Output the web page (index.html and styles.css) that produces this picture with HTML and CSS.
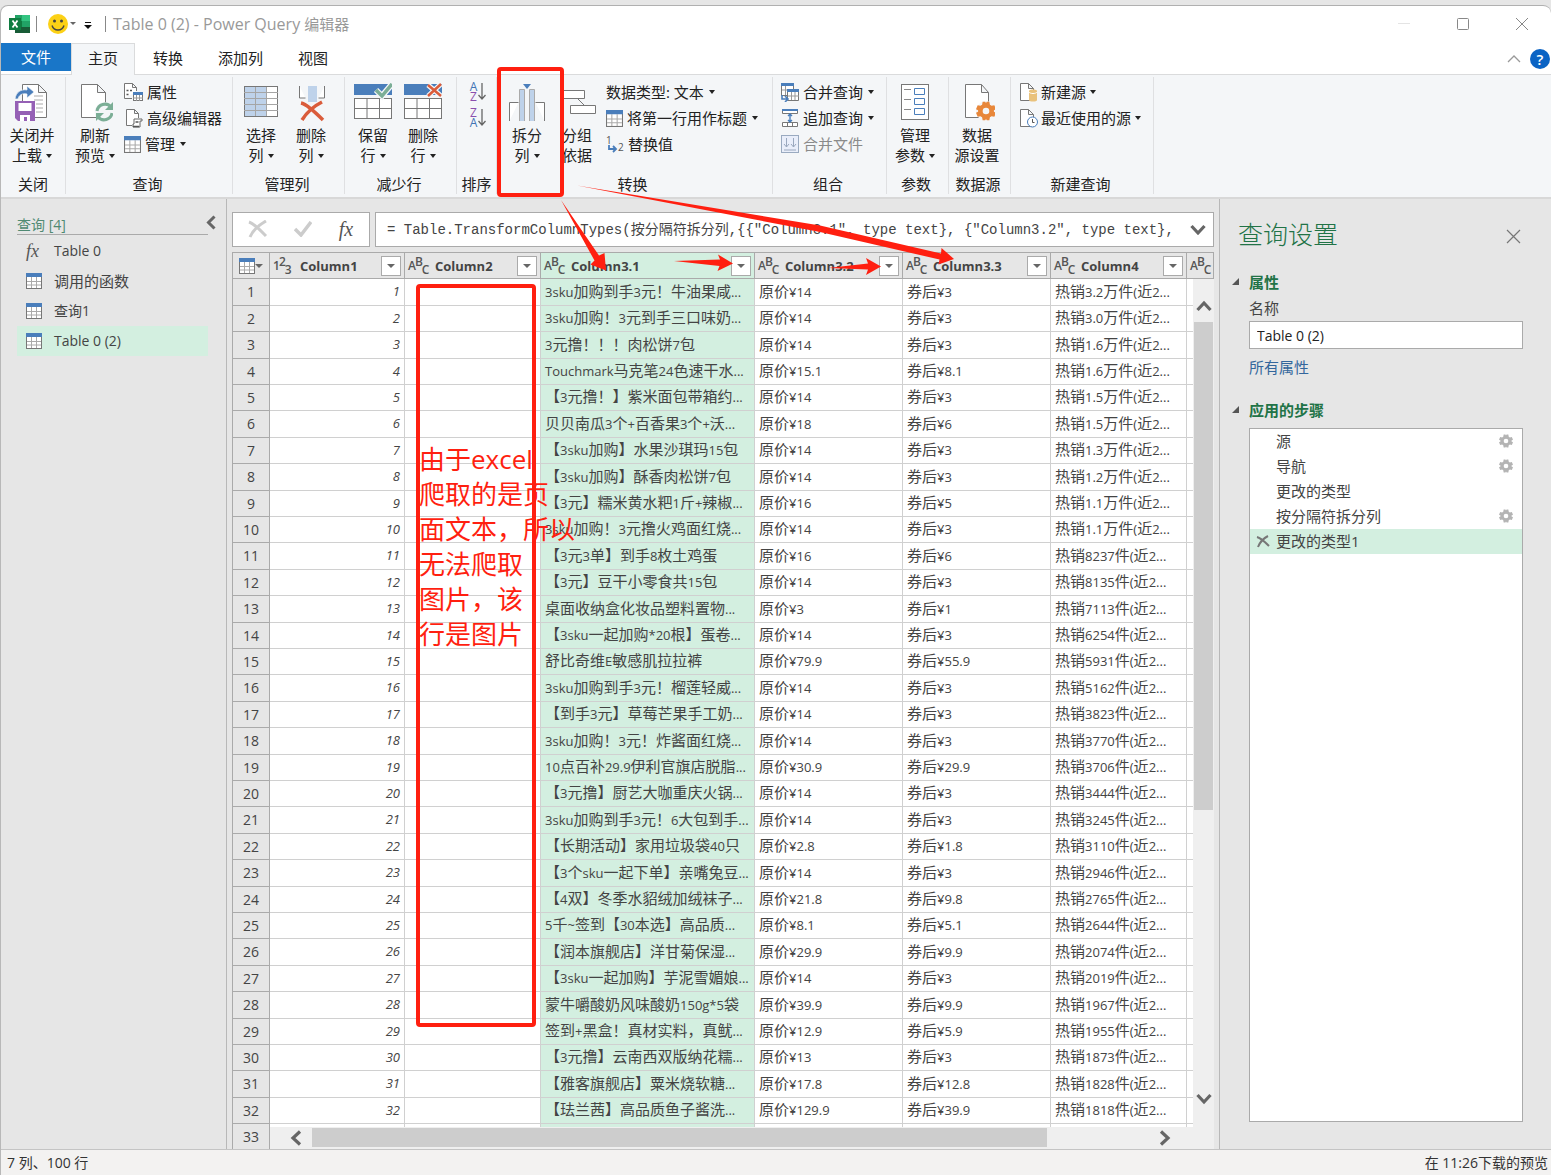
FILE: index.html
```html
<!DOCTYPE html>
<html lang="zh-CN">
<head>
<meta charset="utf-8">
<title>Table 0 (2) - Power Query 编辑器</title>
<link rel="stylesheet" href="styles.css">
</head>
<body>
<svg width="0" height="0" class="defs" aria-hidden="true">
  <symbol id="i-table" viewBox="0 0 16 16">
    <rect x="0.500" y="1.500" width="15" height="14" fill="#fff" stroke="#777"/>
    <path d="M1 8.500h14M1 12h14M5.500 4v11M10.500 4v11" stroke="#aaa" fill="none"/>
    <rect width="16" height="4" y="0" fill="#4a7ebb"/>
  </symbol>
  <symbol id="i-gear" viewBox="0 0 24 24">
    <path fill="currentColor" fill-rule="evenodd" d="M8 1h3l1 1.500L13 1h3l.7 3.600 2 1.200L22 5l2 5-2.500 1v2L24 14l-2 5-3.300-.8-2 1.200L16 23h-3l-1-1.500L11 23H8l-.7-3.600-2-1.200L2 19l-2-5 2.500-1v-2L0 10l2-5 3.300.8 2-1.200zM12 8a4 4 0 1 0 0 8a4 4 0 1 0 0-8z"/>
  </symbol>
  <symbol id="i-grid" viewBox="0 0 38 38">
    <rect x="0.500" y="14.500" width="37" height="20" fill="#fff" stroke="#777"/>
    <path d="M0 24.500h38M13 15v19M25.500 15v19" stroke="#777" fill="none"/>
    <rect width="38" height="11" fill="#4a7ebb"/>
  </symbol>
  <symbol id="i-up" viewBox="0 0 16 12"><path d="M1.500 10L8 3l6.500 7" fill="none" stroke="#666" stroke-width="3.200"/></symbol>
</svg>

<div class="window">
  <header class="titlebar">
    <svg width="21" height="20" viewBox="0 0 21 20"><rect x="6" y="1" width="15" height="18" fill="#21a366"/><path d="M13 1h8v6h-8z" fill="#33c481"/><path d="M6 7h7v6H6z" fill="#107c41"/><path d="M6 13h15v6H6z" fill="#185c37"/><rect x="0" y="4" width="12" height="12" fill="#107c41"/><path d="M3.500 6.500l5 7M8.500 6.500l-5 7" stroke="#fff" stroke-width="1.800"/></svg>
    <i class="vbar"></i>
    <svg class="smile" width="20" height="20" viewBox="0 0 20 20"><circle cx="10" cy="10" r="10" fill="#fcd116"/><circle cx="6.500" cy="7" r="1.500" fill="#444"/><circle cx="13.500" cy="7" r="1.500" fill="#444"/><path d="M4 11.500c2 6 10 6 12 0" fill="none" stroke="#444" stroke-width="1.400"/></svg>
    <i class="caret grey"></i>
    <svg class="more" width="8" height="8" viewBox="0 0 8 8"><path d="M1 0h6v1H1zM0 3h8L4 7z" fill="#111"/></svg>
    <i class="vbar"></i>
    <h1>Table 0 (2) - Power Query <span class="cjk">编辑器</span></h1>
    <div class="winbtns">
      <button type="button" aria-label="最小化"><svg width="14" height="14"><path d="M1 6.500h12" stroke="#e4e4e4"/></svg></button>
      <button type="button" aria-label="最大化"><svg width="14" height="14"><rect x="1.500" y="1.500" width="11" height="11" rx="1" fill="none" stroke="#888"/></svg></button>
      <button type="button" aria-label="关闭"><svg width="14" height="14"><path d="M1 1l12 12M13 1L1 13" stroke="#888"/></svg></button>
    </div>
  </header>

  <nav class="tabs">
    <button type="button" class="tab file">文件</button>
    <button type="button" class="tab active">主页</button>
    <button type="button" class="tab">转换</button>
    <button type="button" class="tab">添加列</button>
    <button type="button" class="tab">视图</button>
    <div class="tabend">
      <button type="button" aria-label="折叠功能区"><svg width="14" height="9"><path d="M1 8l6-6 6 6" fill="none" stroke="#999" stroke-width="1.300"/></svg></button>
      <button type="button" class="help">?</button>
    </div>
  </nav>

  <section class="ribbon">
    <div class="group g-close">
      <div class="tools">
        <button type="button" class="big"><svg width="36" height="40" viewBox="0 0 36 40"><path d="M8.500 18V1.500h16l8 8v25H21M24.500 1.500v8h8" fill="#fff" stroke="#777"/><path d="M20 13h9M20 17h9M22 21h7M22 25h7M22 29h7" stroke="#aaa"/><path d="M1 16c1-7 6-10 12-9V3l7 6-7 6v-4c-5-1-8 1-9 5z" fill="#4a7ebb" stroke="#f4f6f8" stroke-width="0.700"/><path d="M1 18h20v20H4l-3-3z" fill="#9560b5"/><path d="M4.500 20h13v8h-13zM6 32h10v6h-3v-4h-3v4H6z" fill="#fff"/></svg><span>关闭并</span><span>上载<i class="caret"></i></span></button>
      </div>
      <div class="gname">关闭</div>
    </div>
    <div class="group g-query">
      <div class="tools">
        <button type="button" class="big"><svg width="36" height="40" viewBox="0 0 36 40"><path d="M4.500 1.500h16l8 8v25h-24zM20.500 1.500v8h8" fill="#fff" stroke="#777"/><circle cx="27.500" cy="29" r="10" fill="#f4f6f8"/><path d="M20 28a8 8 0 0 1 14-4M35 30a8 8 0 0 1-14 4" fill="none" stroke="#7bae96" stroke-width="3"/><path d="M36 19v8h-8zM19 38v-8h8z" fill="#7bae96"/></svg><span>刷新</span><span>预览<i class="caret"></i></span></button>
        <div class="stack">
          <button type="button"><svg width="19" height="19" viewBox="0 0 19 19"><path d="M.5 15.500V.5h8l4 4V8M8.500.5v4h4M.5 15.500H8" fill="#fff" stroke="#777"/><path d="M2.500 7.500h2M2.500 11.500h2M6 7.500h2" stroke="#555" stroke-width="1.500"/><rect x="9.500" y="9.500" width="9" height="8" fill="#fff" stroke="#777"/><path d="M9 9h10v3H9z" fill="#4a7ebb"/><path d="M9 15h10M12.500 12v6M15.500 12v6" stroke="#999"/></svg>属性</button>
          <button type="button"><svg width="19" height="19" viewBox="0 0 19 19"><path d="M8 16.500H2.500V.5h8l4 4V9M10.500.5v4h4" fill="#fff" stroke="#777"/><path d="M10 10h8v2h-2v6H9v-3h1z" fill="#fff" stroke="#666"/><path d="M11.500 13h3M9 17.500h6" stroke="#555" stroke-width="1.500"/></svg>高级编辑器</button>
          <button type="button"><svg width="17" height="17"><use href="#i-table"/></svg>管理<i class="caret"></i></button>
        </div>
      </div>
      <div class="gname">查询</div>
    </div>
    <div class="group g-cols">
      <div class="tools">
        <button type="button" class="big"><svg width="36" height="40" viewBox="0 0 36 40"><rect x="1.500" y="3.500" width="33" height="30" fill="#fff" stroke="#777"/><path d="M2 4h21v29H2z" fill="#bed2ea"/><path d="M1 9.500h34M1 15.500h34M1 21.500h34M1 27.500h34M12.500 4v29M23.500 4v29" stroke="#a5a5a5"/></svg><span>选择</span><span>列<i class="caret"></i></span></button>
        <button type="button" class="big"><svg width="36" height="40" viewBox="0 0 36 40"><path d="M6.500 3v12h6M31.500 3v12h-6" fill="#fff" stroke="#777"/><path d="M15 3h9v16h-9z" fill="#bed2ea"/><path d="M8 20c5 1 16 11 22 17M29 19c-8 4-15 10-20 18" fill="none" stroke="#da5c3b" stroke-width="3.500"/></svg><span>删除</span><span>列<i class="caret"></i></span></button>
      </div>
      <div class="gname">管理列</div>
    </div>
    <div class="group g-rows">
      <div class="tools">
        <button type="button" class="big"><svg width="38" height="40" viewBox="0 0 38 40"><use href="#i-grid" y="1" width="38" height="38"/><path d="M22 7l6 6L38 1" fill="none" stroke="#f4f6f8" stroke-width="6"/><path d="M22 7l6 6L38 1" fill="none" stroke="#7bae96" stroke-width="3.500"/></svg><span>保留</span><span>行<i class="caret"></i></span></button>
        <button type="button" class="big"><svg width="38" height="40" viewBox="0 0 38 40"><use href="#i-grid" y="1" width="38" height="38"/><path d="M24 2l13 11M37 1L24 13" stroke="#f4f6f8" stroke-width="5"/><path d="M24 2l13 11M37 1L24 13" stroke="#da5c3b" stroke-width="2.500"/></svg><span>删除</span><span>行<i class="caret"></i></span></button>
      </div>
      <div class="gname">减少行</div>
    </div>
    <div class="group g-sort">
      <div class="tools">
        <div class="stack">
          <button type="button" aria-label="升序"><span class="az"><b class="blue">A</b><b class="purple">Z</b></span><svg width="8" height="20" viewBox="0 0 8 20"><path d="M4 1v16M.5 13L4 17l3.500-4" fill="none" stroke="#666" stroke-width="1.300"/></svg></button>
          <button type="button" aria-label="降序"><span class="az"><b class="purple">Z</b><b class="blue">A</b></span><svg width="8" height="20" viewBox="0 0 8 20"><path d="M4 1v16M.5 13L4 17l3.500-4" fill="none" stroke="#666" stroke-width="1.300"/></svg></button>
        </div>
      </div>
      <div class="gname">排序</div>
    </div>
    <div class="group g-trans">
      <div class="tools">
        <button type="button" class="big"><svg width="38" height="40" viewBox="0 0 38 40"><path d="M1.500 38V19.500h9M36.500 38V19.500h-9" fill="#fff" stroke="#777"/><path d="M11.500 38V6.500h5V38M21.500 38V6.500h5V38" fill="#bed2ea" stroke="#aaa"/><path d="M15 1h8l-4 5z" fill="#4a7ebb"/></svg><span>拆分</span><span>列<i class="caret"></i></span></button>
        <button type="button" class="big"><svg width="38" height="40" viewBox="0 0 38 40"><path d="M3.500 7.500h23v8h-23zM12.500 22.500h25v8h-25z" fill="#fff" stroke="#777"/><path d="M20 16l6 6" stroke="#777"/></svg><span>分组</span><span>依据</span></button>
        <div class="stack">
          <button type="button">数据类型: 文本<i class="caret"></i></button>
          <button type="button"><svg width="17" height="17"><use href="#i-table"/></svg>将第一行用作标题<i class="caret"></i></button>
          <button type="button"><svg width="18" height="19" viewBox="0 0 18 19"><text x="0" y="9" class="rep">1</text><text x="12" y="16" class="rep">2</text><path d="M3 10v4h6M7 11l3 3-3 3" fill="none" stroke="#4a7ebb" stroke-width="1.800"/></svg>替换值</button>
        </div>
      </div>
      <div class="gname">转换</div>
    </div>
    <div class="group g-comb">
      <div class="tools">
        <div class="stack">
          <button type="button"><svg width="18" height="19" viewBox="0 0 18 19"><path d="M.5.500h12v12H.5z" fill="#fff" stroke="#777"/><path d="M0 0h13v3H0z" fill="#4a7ebb"/><path d="M4.500 3v9M1 7h5" stroke="#999"/><path d="M6.500 6.500h11v11h-11z" fill="#fff" stroke="#777"/><path d="M6 6h12v3H6z" fill="#4a7ebb"/><path d="M7 13h11M10.500 9v8M14 9v8" stroke="#999"/><path d="M1 12v4h5M4 13l3 3-3 3" fill="none" stroke="#4a7ebb" stroke-width="1.600"/></svg>合并查询<i class="caret"></i></button>
          <button type="button"><svg width="18" height="18" viewBox="0 0 18 18"><path d="M1.500.5h15v4h-15zM1.500 13.500h15v4h-15z" fill="#fff" stroke="#777"/><path d="M1 0h16v2H1z" fill="#4a7ebb"/><path d="M6.500 14v3M11.500 14v3" stroke="#777"/><path d="M9 5v8M7 7l2-2 2 2M7 11l2 2 2-2" fill="none" stroke="#4a7ebb" stroke-width="1.400"/></svg>追加查询<i class="caret"></i></button>
          <button type="button" disabled><svg width="18" height="18" viewBox="0 0 18 18"><rect x="0.500" y="0.500" width="17" height="17" fill="#e9eefa" stroke="#9aaac0"/><path d="M5.500 3v9M3 9l2.500 3L8 9M12.500 3v9M10 9l2.500 3L15 9M3 15h12" fill="none" stroke="#9aa8be"/></svg>合并文件</button>
        </div>
      </div>
      <div class="gname">组合</div>
    </div>
    <div class="group g-param">
      <div class="tools">
        <button type="button" class="big"><svg width="30" height="40" viewBox="0 0 30 40"><rect x="1.500" y="1.500" width="27" height="35" fill="#fff" stroke="#777"/><path d="M4 6.500h7M4 16.500h7M4 26.500h7" stroke="#888"/><path d="M14.500 5.500h10v6h-10zM14.500 15.500h10v6h-10zM14.500 25.500h10v6h-10z" fill="#fff" stroke="#4a7ebb"/></svg><span>管理</span><span>参数<i class="caret"></i></span></button>
      </div>
      <div class="gname">参数</div>
    </div>
    <div class="group g-src">
      <div class="tools">
        <button type="button" class="big"><svg width="36" height="40" viewBox="0 0 36 40"><path d="M6.500 1.500h16l7 8v25h-23zM22.500 1.500v8h7" fill="#fff" stroke="#777"/><circle cx="27" cy="28" r="10" fill="#f4f6f8"/><g color="#e8873a"><use href="#i-gear" x="17" y="18" width="20" height="20"/></g></svg><span>数据</span><span>源设置</span></button>
      </div>
      <div class="gname">数据源</div>
    </div>
    <div class="group g-new">
      <div class="tools">
        <div class="stack">
          <button type="button"><svg width="18" height="19" viewBox="0 0 18 19"><path d="M.5.500h8l5 5v12H.5zM8.500.5v5h5" fill="#fff" stroke="#777"/><path d="M9 8c0-2 8-2 8 0v9c0 2-8 2-8 0z" fill="#e9c27c"/><path d="M9 9c1 2 7 2 8 0" fill="none" stroke="#fff"/></svg>新建源<i class="caret"></i></button>
          <button type="button"><svg width="18" height="19" viewBox="0 0 18 19"><path d="M.5.500h8l5 5v12H.5zM8.500.5v5h5" fill="#fff" stroke="#777"/><circle cx="12.500" cy="13" r="5" fill="#fff" stroke="#4a7ebb"/><path d="M12.500 10v3.500h2" fill="none" stroke="#555"/></svg>最近使用的源<i class="caret"></i></button>
        </div>
      </div>
      <div class="gname">新建查询</div>
    </div>
  </section>

  <main class="main">
    <aside class="queries">
      <div class="qhead"><h2>查询 [4]</h2><button type="button" aria-label="折叠"><svg width="10" height="15"><path d="M8.500 1.500L2.500 7.500l6 6" fill="none" stroke="#666" stroke-width="3"/></svg></button></div>
      <ul>
        <li><span class="fx">fx</span>Table 0</li>
        <li><svg width="16" height="16"><use href="#i-table"/></svg><span class="cjk">调用的函数</span></li>
        <li><svg width="16" height="16"><use href="#i-table"/></svg>查询1</li>
        <li class="sel"><svg width="16" height="16"><use href="#i-table"/></svg>Table 0 (2)</li>
      </ul>
    </aside>

    <section class="center">
      <div class="formula">
        <div class="fbtns">
          <button type="button" aria-label="取消"><svg width="20" height="18"><path d="M1 2c6 2 12 9 17 14M18 1C11 5 5 10 2 17" fill="none" stroke="#ccc" stroke-width="3"/></svg></button>
          <button type="button" aria-label="确认"><svg width="18" height="16"><path d="M1 8l6 6L17 1" fill="none" stroke="#ccc" stroke-width="3.500"/></svg></button>
          <button type="button" class="fx">fx</button>
        </div>
        <div class="fbox">
          <input type="text" aria-label="公式栏" value='= Table.TransformColumnTypes(按分隔符拆分列,{{"Column3.1", type text}, {"Column3.2", type text},'>
          <button type="button" aria-label="展开"><svg width="16" height="12" class="flip"><use href="#i-up"/></svg></button>
        </div>
      </div>
      <div class="gridwrap">
        <table class="grid">
          <colgroup><col class="c-n"><col class="c-1"><col class="c-2"><col class="c-31"><col class="c-32"><col class="c-33"><col class="c-4"><col></colgroup>
          <thead><tr>
            <th class="corner"><svg width="16" height="16"><use href="#i-table"/></svg><i class="caret grey"></i></th>
            <th><div class="th"><span class="type"><b>1</b><b>2</b><b>3</b></span><span class="name">Column1</span><button type="button" aria-label="筛选"><i class="caret grey"></i></button></div></th>
            <th><div class="th"><span class="type"><b>A</b><b>B</b><b>C</b></span><span class="name">Column2</span><button type="button" aria-label="筛选"><i class="caret grey"></i></button></div></th>
            <th class="hot"><div class="th"><span class="type"><b>A</b><b>B</b><b>C</b></span><span class="name">Column3.1</span><button type="button" aria-label="筛选"><i class="caret grey"></i></button></div></th>
            <th><div class="th"><span class="type"><b>A</b><b>B</b><b>C</b></span><span class="name">Column3.2</span><button type="button" aria-label="筛选"><i class="caret grey"></i></button></div></th>
            <th><div class="th"><span class="type"><b>A</b><b>B</b><b>C</b></span><span class="name">Column3.3</span><button type="button" aria-label="筛选"><i class="caret grey"></i></button></div></th>
            <th><div class="th"><span class="type"><b>A</b><b>B</b><b>C</b></span><span class="name">Column4</span><button type="button" aria-label="筛选"><i class="caret grey"></i></button></div></th>
            <th><div class="th"><span class="type"><b>A</b><b>B</b><b>C</b></span></div></th>
          </tr></thead>
          <tbody id="rows"></tbody>
        </table>
        <div class="vscroll"><button type="button" aria-label="向上"><svg width="16" height="12"><use href="#i-up"/></svg></button><div class="thumb"></div><div class="track"></div><button type="button" aria-label="向下"><svg width="16" height="12" class="flip"><use href="#i-up"/></svg></button></div>
        <div class="hscroll"><button type="button" aria-label="向左"><svg width="12" height="16"><path d="M10 1.500L3 8l7 6.500" fill="none" stroke="#666" stroke-width="3.200"/></svg></button><div class="thumb"></div><div class="track"></div><button type="button" aria-label="向右"><svg width="12" height="16"><path d="M2 1.500L9 8l-7 6.500" fill="none" stroke="#666" stroke-width="3.200"/></svg></button></div>
      </div>
    </section>

    <aside class="settings">
      <div class="shead"><h2>查询设置</h2><button type="button" aria-label="关闭"><svg width="15" height="15"><path d="M1 1l13 13M14 1L1 14" stroke="#777" stroke-width="1.200"/></svg></button></div>
      <h3><svg width="8" height="8"><path d="M7 0v7H0z" fill="#555"/></svg>属性</h3>
      <label for="qname">名称</label>
      <input id="qname" type="text" value="Table 0 (2)">
      <a href="#">所有属性</a>
      <h3><svg width="8" height="8"><path d="M7 0v7H0z" fill="#555"/></svg>应用的步骤</h3>
      <ol class="steps">
        <li>源<svg width="14" height="14"><use href="#i-gear"/></svg></li>
        <li>导航<svg width="14" height="14"><use href="#i-gear"/></svg></li>
        <li>更改的类型</li>
        <li>按分隔符拆分列<svg width="14" height="14"><use href="#i-gear"/></svg></li>
        <li class="sel"><button type="button" aria-label="删除步骤"><svg width="14" height="13"><path d="M1 2c4 1 8 5 12 9M12 1C8 3 4 7 2 12" fill="none" stroke="#777" stroke-width="2"/></svg></button>更改的类型1</li>
      </ol>
    </aside>
  </main>

  <footer class="status"><span>7 列、100 行</span><span>在 11:26下载的预览</span></footer>
</div>

<div class="notes">
  <svg width="1000" height="1040" aria-hidden="true">
    <g fill="none" stroke="#ff1f10" stroke-width="4"><rect x="499" y="69" width="63" height="126" rx="2"/><rect x="418" y="286" width="116" height="739" rx="2"/></g>
    <g fill="#ff1f10">
      <path d="M561 200L599 255.500l5.500-2.500 1.500 17.500-15.500-6 4-4z"/>
      <path d="M577 185.500L820 225.500l121 28 .5-5.500 12.500 11-15.500 5.500 1-5L820 232z"/>
      <path d="M674 261l46-1.500-2-5 15 9-15.500 7.500 2-5z"/>
      <path d="M828 268l40-4.500-2-5.500 15 8.500-15 8.500 2-5.500z"/>
    </g>
  </svg>
  <p>由于excel<br>爬取的是页<br>面文本，所以<br>无法爬取<br>图片，该<br>行是图片</p>
</div>
<script src="rows.js"></script>
</body>
</html>
```
FILE: styles.css
```css
* { box-sizing: border-box; }
body {
  margin: 0;
  padding-top: 5px;
  height: 100vh;
  overflow: hidden;
  background: #e6e6e6;
  color: #222;
  font: 15px/20px "Open Sans", "Noto Sans CJK SC", sans-serif;
}
h1, h2, h3, ul, ol, p { margin: 0; padding: 0; font-weight: 400; }
ul, ol { list-style: none; }
button { border: 0; background: none; padding: 0; margin: 0; font: inherit; color: inherit; }
svg { flex: none; display: block; }
.defs { position: absolute; }
.window {
  height: 100%;
  display: flex;
  flex-direction: column;
  border-top: 1px solid #b0b0b0;
  border-left: 1px solid #b8b8b8;
  border-radius: 8px 8px 0 0;
  background: #fff;
  overflow: hidden;
}

.caret {
  display: inline-block;
  border: 3px solid transparent;
  border-top: 4px solid #222;
  border-bottom: 0;
  margin-left: 4px;
  vertical-align: 3px;
}
.caret.grey { border-width: 4px 4px 0; border-top-color: #666; margin: 0; }

.titlebar { display: flex; align-items: center; height: 37px; padding: 0 0 2px 8px; color: #999; }
.vbar { width: 1px; height: 16px; background: #888; margin-left: 6px; }
.smile { margin-left: 11px; }
.titlebar .caret { margin-left: 2px; border-width: 3px 3px 0; }
.more { margin: 4px 6px 0 8px; }
.titlebar .more + .vbar { margin-left: 7px; }
.titlebar h1 { font-size: 16px; line-height: 20px; margin-left: 7px; flex: 1; }
.winbtns { display: flex; }
.winbtns button { width: 59px; display: flex; justify-content: center; }

.tabs { display: flex; height: 32px; gap: 1px; border-bottom: 1px solid #dadbdc; }
.tab { padding: 0 17px; height: 30px; }
.file { background: #1976c8; color: #fff; height: 28px; padding: 0 20px; }
.tab.active { height: 32px; padding: 0 16px 3px; background: #f4f6f8; border: 1px solid #dadbdc; border-bottom: 0; margin-left: -1px; }
.tabend { margin-left: auto; display: flex; align-items: center; gap: 9px; }
.help { width: 20px; height: 20px; border-radius: 50%; background: #0a63c4; color: #fff; font-weight: 600; line-height: 20px; margin-right: 1px; }

.ribbon { display: flex; height: 124px; background: #f4f6f8; border-bottom: 2px solid #d8d8d8; }
.group { display: flex; flex-direction: column; border-right: 1px solid #dfe0e2; margin: 2px 0 3px; white-space: nowrap; }
.tools { display: flex; height: 99px; padding-top: 6px; }
.gname { text-align: center; line-height: 20px; padding-right: 3px; }
.big { width: 50px; display: flex; flex-direction: column; align-items: center; }
.big span { line-height: 20px; }
.big svg + span { margin-top: 2px; }
.stack { display: flex; flex-direction: column; margin-top: -4px; }
.stack button { display: flex; align-items: center; gap: 4px; height: 26px; }
.stack .caret { margin-left: 1px; }
.stack button:disabled { color: #8a8a8a; }
.g-close { width: 65px; } .g-close .big { width: 62px; } .g-close .gname { padding-right: 0; }
.g-query { width: 167px; } .g-query .big { width: 58px; }
.g-cols, .g-rows { width: 112px; padding-left: 3px; }
.g-cols .gname, .g-rows .gname { margin-left: -3px; }
.g-sort { width: 40px; } .g-sort .stack { margin-left: 12px; } .g-sort .stack button { gap: 0; } .g-sort .gname { padding-right: 0; }
.g-trans { width: 276px; } .g-trans .tools { padding-left: 5px; } .g-trans .stack { margin-left: 4px; } .g-trans .gname { padding-right: 4px; }
.g-comb { width: 114px; padding-left: 8px; } .g-comb .gname { margin-left: -8px; }
.g-param, .g-src { width: 62px; } .g-param .big, .g-src .big { width: 56px; }
.g-new { width: 143px; } .g-new .stack { margin-left: 9px; } .g-new .stack button { gap: 3px; }
.az { display: flex; flex-direction: column; width: 9px; font-size: 12px; line-height: 10px; text-align: center; }
.az b { font-weight: 400; }
.blue { color: #3f74b5; }
.purple { color: #8a4fae; }
.rep { font: 10px "Open Sans", sans-serif; fill: #555; }

.main { flex: 1; min-height: 0; display: grid; grid-template-columns: 226px minmax(0, 1fr) 332px; background: #e6e6e6; color: #444; }
.queries { border-right: 1px solid #b8b8b8; padding: 12px 18px 0 16px; }
.qhead { display: flex; justify-content: space-between; align-items: center; height: 24px; border-bottom: 1px solid #aaa; }
.qhead h2 { font-size: 14px; color: #4f8a72; padding-top: 4px; }
.qhead button { margin-right: -8px; }
.queries ul { padding-top: 1px; }
.queries li { display: flex; align-items: center; height: 30px; gap: 12px; padding-left: 9px; font-size: 14px; }
.sel { background: #d3efe0; }
.fx { font: italic 18px/20px "Liberation Serif", serif; width: 16px; color: #555; }

.center { display: flex; flex-direction: column; padding: 13px 5px 0; overflow: hidden; }
.formula { display: flex; gap: 5px; height: 35px; }
.fbtns, .fbox { background: #fff; border: 1px solid #aaa; display: flex; align-items: center; }
.fbtns { width: 138px; justify-content: space-between; padding: 0 15px 2px; }
.fbtns .fx { font-size: 20px; }
.fbox { flex: 1; padding: 0 7px 0 11px; }
.fbox input { flex: 1; min-width: 0; border: 0; padding: 0; background: none; font: 14px/20px "Liberation Mono", "Noto Sans CJK SC", monospace; color: #444; }
.flip { transform: rotate(180deg); }
.gridwrap { position: relative; flex: 1; min-height: 0; margin-top: 5px; overflow: hidden; }
.grid { width: 100%; table-layout: fixed; border-spacing: 0; border-left: 1px solid #aaa; border-top: 1px solid #aaa; }
.c-n { width: 37px; } .c-1 { width: 135px; } .c-2 { width: 136px; } .c-31 { width: 214px; }
.c-32, .c-33 { width: 148px; } .c-4 { width: 136px; }
.grid th, .grid td { padding: 0; white-space: nowrap; overflow: hidden; }
.grid thead th { height: 26px; background: #e6e6e6; border-right: 1px solid #aaa; border-bottom: 1px solid #aaa; font-weight: 700; font-size: 13px; }
.grid thead th.hot, .grid td.hot { background: #d3efe0; }
.grid thead .corner { font-size: 0; }
.corner svg, .corner .caret { display: inline-block; vertical-align: middle; }
.th { display: flex; align-items: center; height: 25px; padding: 0 3px; }
.type { display: flex; width: 20px; height: 20px; font-size: 12px; line-height: 12px; color: #555; }
.type b { font-weight: 600; align-self: center; }
.type b:nth-child(2) { align-self: flex-start; margin-left: -1px; }
.type b:nth-child(3) { align-self: flex-end; margin-left: -1px; }
.name { margin-left: 7px; }
.th button { width: 20px; height: 20px; margin-left: auto; background: #fff; border: 1px solid #aaa; display: flex; align-items: center; justify-content: center; }
.grid tbody tr { height: 26px; }
.grid tbody tr:nth-child(5n+1), .grid tbody tr:nth-child(5n+3) { height: 27px; }
.grid tbody th { background: #e6e6e6; border-right: 1px solid #aaa; border-bottom: 1px solid #aaa; font-weight: 400; font-size: 14px; line-height: 20px; }
.grid td { background: #fff; border-right: 1px solid #d0d0d0; border-bottom: 1px solid #d0d0d0; font-size: 13px; line-height: 20px; padding: 0 0 2px 4px; }
.grid td.num { text-align: right; font-style: italic; padding-right: 4px; }
.cjk { font-size: 15px; line-height: 20px; }

.vscroll { position: absolute; top: 27px; right: 0; bottom: 22px; width: 21px; background: #efefef; display: flex; flex-direction: column; }
.vscroll button { height: 43px; display: flex; align-items: center; justify-content: center; padding-top: 10px; }
.vscroll button:last-child { height: 57px; padding: 0; }
.thumb { background: #cdcdcd; }
.vscroll .thumb { flex: 488; margin: 0 1px; }
.vscroll .track { flex: 260; }
.hscroll { position: absolute; left: 38px; right: 0; bottom: 0; height: 22px; background: #efefef; display: flex; }
.hscroll button { width: 42px; display: flex; align-items: center; justify-content: center; padding-left: 10px; }
.hscroll button:last-child { width: 98px; padding: 0; }
.hscroll .thumb { flex: 735; margin: 1px 0 2px; }
.hscroll .track { flex: 69; }

.settings { border-left: 1px solid #b8b8b8; padding: 20px 28px 27px 29px; display: flex; flex-direction: column; }
.shead { display: flex; align-items: center; justify-content: space-between; height: 30px; margin-left: -11px; }
.shead h2 { font-size: 25px; line-height: 30px; color: #217346; font-weight: 300; }
.shead button { margin: 4px 2px 0 0; }
.settings h3 { display: flex; align-items: center; gap: 9px; margin-left: -17px; font-size: 15px; font-weight: 700; color: #217346; margin-top: 23px; height: 20px; }
.settings label { margin-top: 6px; height: 20px; }
.settings > input { width: 100%; height: 28px; margin-top: 3px; border: 1px solid #aaa; background: #fff; padding: 0 7px; font: 14px/20px "Open Sans", "Noto Sans CJK SC", sans-serif; color: #222; }
.settings > a { color: #33669c; text-decoration: none; margin-top: 8px; }
.steps { flex: 1; background: #fff; border: 1px solid #aaa; margin-top: 8px; }
.steps li { display: flex; align-items: center; height: 25px; padding: 0 9px 1px 26px; }
.steps li > svg { margin-left: auto; color: #b4b4b4; }
.steps li.sel { padding-left: 6px; gap: 6px; }

.status { height: 26px; display: flex; justify-content: space-between; align-items: center; padding: 0 3px 0 6px; background: #f3f2f1; border-top: 1px solid #c4c4c4; font-size: 14px; color: #333; }

.notes { position: absolute; left: 0; top: 0; pointer-events: none; }
.notes p { position: absolute; left: 419px; top: 442px; width: 180px; color: #ff1f10; font-size: 26px; line-height: 35px; white-space: nowrap; }
```
FILE: rows.js
```js
const rows = [
  ["3sku加购到手3元！牛油果咸...", "14", "3", "3.2万"],
  ["3sku加购！3元到手三口味奶...", "14", "3", "3.0万"],
  ["3元撸！！！肉松饼7包", "14", "3", "1.6万"],
  ["Touchmark马克笔24色速干水...", "15.1", "8.1", "1.6万"],
  ["【3元撸！】紫米面包带箱约...", "14", "3", "1.5万"],
  ["贝贝南瓜3个+百香果3个+沃...", "18", "6", "1.5万"],
  ["【3sku加购】水果沙琪玛15包", "14", "3", "1.3万"],
  ["【3sku加购】酥香肉松饼7包", "14", "3", "1.2万"],
  ["【3元】糯米黄水粑1斤+辣椒...", "16", "5", "1.1万"],
  ["3sku加购！3元撸火鸡面红烧...", "14", "3", "1.1万"],
  ["【3元3单】到手8枚土鸡蛋", "16", "6", "8237"],
  ["【3元】豆干小零食共15包", "14", "3", "8135"],
  ["桌面收纳盒化妆品塑料置物...", "3", "1", "7113"],
  ["【3sku一起加购*20根】蛋卷...", "14", "3", "6254"],
  ["舒比奇维E敏感肌拉拉裤", "79.9", "55.9", "5931"],
  ["3sku加购到手3元！榴莲轻威...", "14", "3", "5162"],
  ["【到手3元】草莓芒果手工奶...", "14", "3", "3823"],
  ["3sku加购！3元！炸酱面红烧...", "14", "3", "3770"],
  ["10点百补29.9伊利官旗店脱脂...", "30.9", "29.9", "3706"],
  ["【3元撸】厨艺大咖重庆火锅...", "14", "3", "3444"],
  ["3sku加购到手3元！6大包到手...", "14", "3", "3245"],
  ["【长期活动】家用垃圾袋40只", "2.8", "1.8", "3110"],
  ["【3个sku一起下单】亲嘴兔豆...", "14", "3", "2946"],
  ["【4双】冬季水貂绒加绒袜子...", "21.8", "9.8", "2765"],
  ["5千~签到【30本选】高品质...", "8.1", "5.1", "2644"],
  ["【润本旗舰店】洋甘菊保湿...", "29.9", "9.9", "2074"],
  ["【3sku一起加购】芋泥雪媚娘...", "14", "3", "2019"],
  ["蒙牛嚼酸奶风味酸奶150g*5袋", "39.9", "9.9", "1967"],
  ["签到+黑盒！真材实料，真鱿...", "12.9", "5.9", "1955"],
  ["【3元撸】云南西双版纳花糯...", "13", "3", "1873"],
  ["【雅客旗舰店】粟米烧软糖...", "17.8", "12.8", "1828"],
  ["【珐兰茜】高品质鱼子酱洗...", "129.9", "39.9", "1818"],
];

// Chinese runs are set slightly larger than Latin text and digits.
const mark = (s) => s.replace(/[\u3000-\u9fff\uff00-\uffef]+/g, '<span class="cjk">$&</span>');
const cell = (s, cls) => `<td${cls ? ` class="${cls}"` : ""}>${mark(s)}</td>`;

document.getElementById("rows").innerHTML = rows
  .map(([name, price, after, sold], i) =>
    `<tr><th scope="row">${i + 1}</th>` + cell(String(i + 1), "num") + cell("") +
    cell(name, "hot") + cell("原价¥" + price) + cell("券后¥" + after) +
    cell("热销" + sold + "件(近2...") + cell("") + "</tr>")
  .join("") +
  `<tr><th scope="row">33</th>` + cell("") + cell("") + cell("", "hot") + cell("").repeat(4) + "</tr>";
```
